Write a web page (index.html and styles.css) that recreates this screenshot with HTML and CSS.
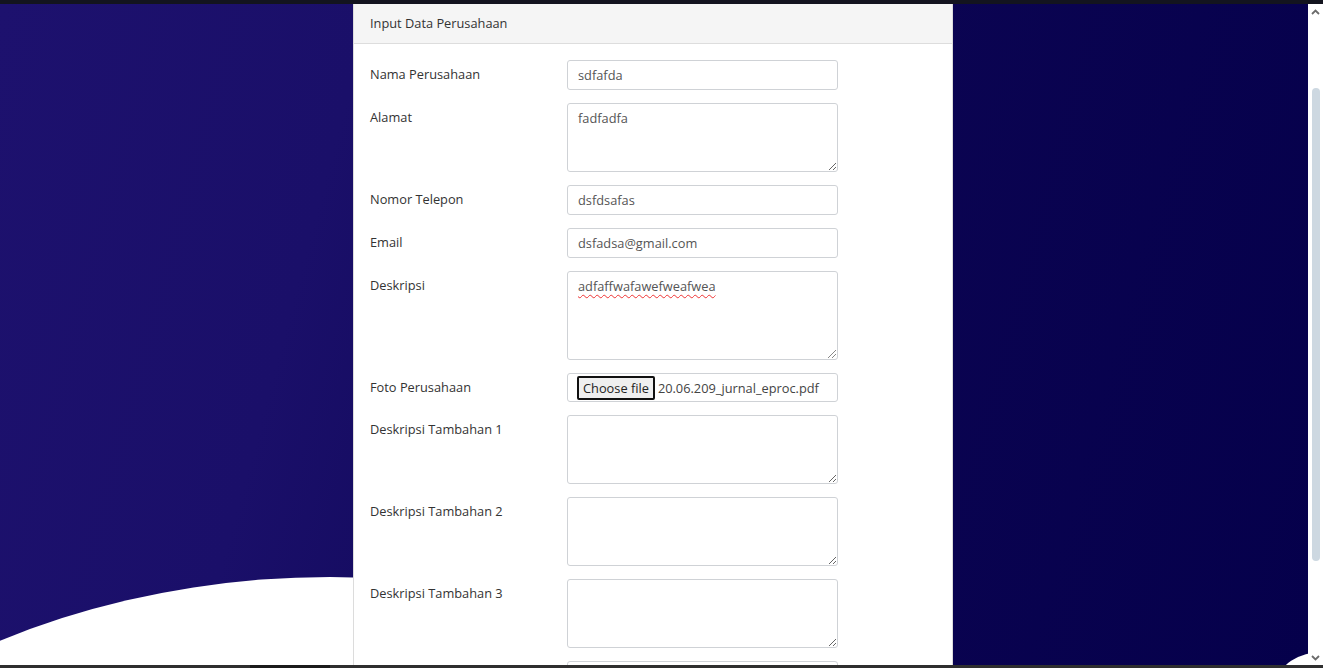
FILE: index.html
```html
<!DOCTYPE html>
<html lang="id">
<head>
<meta charset="utf-8">
<title>Input Data Perusahaan</title>
<link rel="stylesheet" href="styles.css">
</head>
<body>
<div class="topbar"></div>
<div class="window">
  <main class="stage">
    <div class="curve"></div>
    <div class="curve-right"></div>
    <section class="card">
      <header class="card-head">Input Data Perusahaan</header>
      <form class="card-body">
        <label class="lbl">Nama Perusahaan</label>
        <input class="ctl" type="text" value="sdfafda">

        <label class="lbl">Alamat</label>
        <textarea class="ctl area">fadfadfa</textarea>

        <label class="lbl">Nomor Telepon</label>
        <input class="ctl" type="text" value="dsfdsafas">

        <label class="lbl">Email</label>
        <input class="ctl" type="text" value="dsfadsa@gmail.com">

        <label class="lbl">Deskripsi</label>
        <div class="ctl area tall fake"><span class="spell">adfaffwafawefweafwea</span></div>

        <label class="lbl">Foto Perusahaan</label>
        <div class="ctl file">
          <span class="file-btn">Choose file</span>
          <span class="file-name">20.06.209_jurnal_eproc.pdf</span>
        </div>

        <label class="lbl">Deskripsi Tambahan 1</label>
        <textarea class="ctl area"></textarea>

        <label class="lbl">Deskripsi Tambahan 2</label>
        <textarea class="ctl area"></textarea>

        <label class="lbl">Deskripsi Tambahan 3</label>
        <textarea class="ctl area"></textarea>

        <label class="lbl"></label>
        <textarea class="ctl area"></textarea>
      </form>
    </section>
  </main>
  <aside class="scrollbar">
    <svg class="arrow" width="15" height="15" viewBox="0 0 15 15"><path d="M4 9 L7.5 5.5 L11 9" fill="none" stroke="#6b6b6b" stroke-width="1.8"/></svg>
    <div class="track"><div class="thumb"></div></div>
    <svg class="arrow" width="15" height="15" viewBox="0 0 15 15"><path d="M4 6 L7.5 9.5 L11 6" fill="none" stroke="#6b6b6b" stroke-width="1.8"/></svg>
  </aside>
</div>
<div class="bottombar"><span class="seg"></span></div>
</body>
</html>
```
FILE: styles.css
```css
html, body {
  margin: 0;
  padding: 0;
  height: 668px;
  overflow: hidden;
  font-family: "Open Sans", "Noto Sans", sans-serif;
  font-size: 12.8px;
  color: #333;
}

.topbar {
  height: 4px;
  background: #13141f;
}

.window {
  display: flex;
  height: 661px;
}

.stage {
  position: relative;
  flex: 1;
  overflow: hidden;
  display: flex;
  justify-content: center;
  padding-right: 2px;
  background: linear-gradient(105deg, #1d116e 0%, #1a0f69 25%, #0b0452 62%, #05004b 100%);
}

.curve {
  position: absolute;
  left: -370px;
  top: 573px;
  width: 1400px;
  height: 1080px;
  border-radius: 50%;
  background: #fff;
  z-index: 0;
}

.curve-right {
  position: absolute;
  right: -60px;
  top: 648px;
  width: 90px;
  height: 60px;
  border-radius: 50%;
  background: #fff;
  z-index: 0;
}

.card {
  position: relative;
  z-index: 1;
  width: 600px;
  background: #fff;
  border-left: 1px solid #dcdcdc;
  border-right: 1px solid #dcdcdc;
  box-sizing: border-box;
  align-self: flex-start;
}

.card-head {
  height: 40px;
  box-sizing: border-box;
  padding: 10px 16px 0;
  background: #f5f5f5;
  border-bottom: 1px solid #dddddd;
  line-height: 18px;
  color: #333;
}

.card-body {
  display: grid;
  grid-template-columns: 197px 272px;
  row-gap: 13px;
  padding: 16px 16px 20px;
}

.lbl {
  padding-top: 5px;
  line-height: 18px;
  color: #333;
}

.ctl {
  box-sizing: border-box;
  width: 271px;
  height: 30px;
  margin: 0;
  padding: 5px 10px;
  border: 1px solid #cfd2d6;
  border-radius: 3px;
  background: #fff;
  font-family: "Open Sans", "Noto Sans", sans-serif;
  font-size: 12.8px;
  line-height: 18px;
  color: #555;
  outline: none;
}

.area {
  height: 69px;
  resize: vertical;
  display: block;
  padding-top: 5px;
}

.tall {
  height: 89px;
}

.fake {
  position: relative;
}

.fake::after {
  content: "";
  position: absolute;
  right: 1px;
  bottom: 1px;
  width: 8px;
  height: 8px;
  background: linear-gradient(135deg, transparent 45%, #888 45%, #888 52%, transparent 52%, transparent 70%, #888 70%, #888 77%, transparent 77%);
}

.spell {
  text-decoration: underline wavy #e33;
  text-decoration-thickness: 1px;
  text-underline-offset: 3px;
}

.file {
  height: 29px;
  display: flex;
  align-items: center;
  gap: 3px;
  padding: 0 8px 0 9px;
}

.file-btn {
  box-sizing: border-box;
  height: 24px;
  padding: 0 4px;
  display: flex;
  align-items: center;
  border: 2px solid #111;
  border-radius: 2px;
  background: #efefef;
  color: #222;
}

.file-name {
  color: #444;
  white-space: nowrap;
}

.scrollbar {
  width: 15px;
  background: #fff;
  display: flex;
  flex-direction: column;
  align-items: center;
}

.arrow {
  flex: none;
  margin-top: 1px;
}

.track {
  flex: 1;
  width: 15px;
  display: flex;
  justify-content: center;
  padding: 68px 0 88px;
  box-sizing: border-box;
}

.thumb {
  width: 8px;
  border-radius: 4px;
  background: #cdd8e1;
}

.bottombar {
  height: 3px;
  background: #2f2f2f;
  display: flex;
}

.seg {
  margin-left: 250px;
  width: 80px;
  background: #1b1b1b;
}
```
